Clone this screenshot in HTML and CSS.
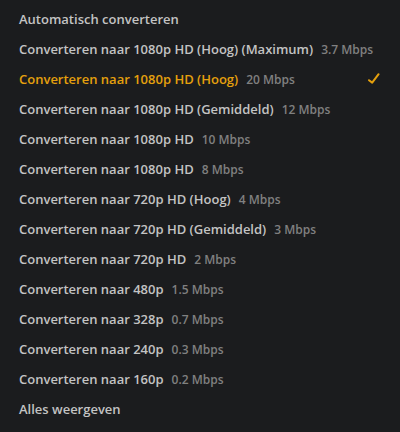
FILE: index.html
```html
<!DOCTYPE html>
<html>
<head>
<meta charset="utf-8">
<link rel="stylesheet" href="styles.css">
</head>
<body>
<ul class="menu">
  <li class="item"><span class="label">Automatisch converteren</span></li>
  <li class="item"><span class="label">Converteren naar 1080p HD (Hoog) (Maximum)</span><span class="rate">3.7 Mbps</span></li>
  <li class="item selected"><span class="label">Converteren naar 1080p HD (Hoog)</span><span class="rate">20 Mbps</span>
    <svg class="check" width="14" height="14" viewBox="0 0 14 14"><path d="M2 8.2 L5.2 10.6 L11.6 2.2" fill="none" stroke="#e5a00d" stroke-width="2" stroke-linecap="round" stroke-linejoin="round"/></svg></li>
  <li class="item"><span class="label">Converteren naar 1080p HD (Gemiddeld)</span><span class="rate">12 Mbps</span></li>
  <li class="item"><span class="label">Converteren naar 1080p HD</span><span class="rate">10 Mbps</span></li>
  <li class="item"><span class="label">Converteren naar 1080p HD</span><span class="rate">8 Mbps</span></li>
  <li class="item"><span class="label">Converteren naar 720p HD (Hoog)</span><span class="rate">4 Mbps</span></li>
  <li class="item"><span class="label">Converteren naar 720p HD (Gemiddeld)</span><span class="rate">3 Mbps</span></li>
  <li class="item"><span class="label">Converteren naar 720p HD</span><span class="rate">2 Mbps</span></li>
  <li class="item"><span class="label">Converteren naar 480p</span><span class="rate">1.5 Mbps</span></li>
  <li class="item"><span class="label">Converteren naar 328p</span><span class="rate">0.7 Mbps</span></li>
  <li class="item"><span class="label">Converteren naar 240p</span><span class="rate">0.3 Mbps</span></li>
  <li class="item"><span class="label">Converteren naar 160p</span><span class="rate">0.2 Mbps</span></li>
  <li class="item"><span class="label">Alles weergeven</span></li>
</ul>
</body>
</html>
```
FILE: styles.css
```css
html, body {
  margin: 0;
  padding: 0;
  background: #1b1c1e;
  width: 400px;
  height: 432px;
  overflow: hidden;
}
.menu {
  list-style: none;
  margin: 0;
  padding: 4px 0 0 0;
  font-family: "Open Sans", sans-serif;
  font-weight: 600;
  font-size: 13px;
}
.item {
  display: flex;
  align-items: center;
  height: 30px;
  padding: 0 19px;
  color: #c3c3c3;
  white-space: nowrap;
}
.rate {
  margin-left: 8px;
  font-size: 12px;
  color: #808080;
}
.selected .label {
  color: #e5a00d;
}
.check {
  margin-left: auto;
}
```
